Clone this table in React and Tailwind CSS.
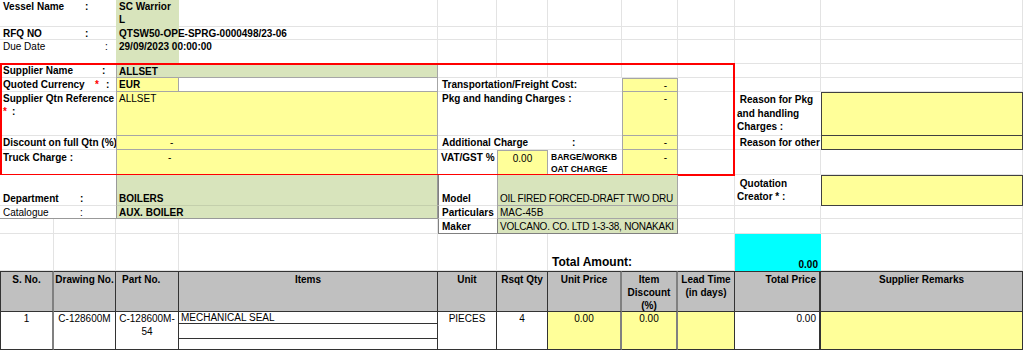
const GRID =
  'grid grid-cols-[54px_62px_63px_259px_59px_51px_74px_56px_57px_86px_202px] grid-rows-[27px_13px_24px_14px_14px_44px_14px_25px_31px_13px_15px_37px_41px_38px]'

const th = 'bg-[#c0c0c0] border-y border-[#333333] pt-px font-bold'
const td = 'border-b border-[#333333]'

export default function App() {
  return (
    <div className="grid w-[1024px] h-[352px] overflow-hidden bg-white text-black text-[10px] leading-[13px] font-['Liberation_Sans',Arial,sans-serif]">
      {/* sheet gridlines */}
      <div className={`${GRID} col-start-1 row-start-1`}>
        {Array.from({ length: 154 }, (_, i) => (
          <div key={i} className="border-r border-b border-[#e3e3e3]" />
        ))}
      </div>

      <div className={`${GRID} col-start-1 row-start-1`}>
        {/* Header block */}
        <div className="col-start-1 col-span-2 row-start-1 flex bg-white border-b border-[#e3e3e3] pl-[3px] font-bold">
          <span className="w-[82px]">Vessel Name</span>:
        </div>
        <div className="col-start-3 row-start-1 row-span-3 bg-[#d8e4bc] pl-[3px] font-bold">
          SC Warrior
          <br />L
        </div>
        <div className="col-start-1 col-span-2 row-start-2 flex bg-white border-b border-[#e3e3e3] pl-[3px] font-bold">
          <span className="w-[82px]">RFQ NO</span>:
        </div>
        <div className="col-start-3 col-span-3 row-start-2 pl-[3px] font-bold whitespace-nowrap">QTSW50-OPE-SPRG-0000498/23-06</div>
        <div className="col-start-1 col-span-2 row-start-3 flex bg-white border-b border-[#e3e3e3] pl-[3px]">
          <span className="w-[102px]">Due Date</span>:
        </div>
        <div className="col-start-3 col-span-3 row-start-3 pl-[3px] font-bold whitespace-nowrap">29/09/2023 00:00:00</div>

        {/* Supplier block */}
        <div className="col-start-1 col-span-2 row-start-4 flex items-center bg-white border-b border-[#e3e3e3] pl-[3px] font-bold">
          <span className="w-[99px]">Supplier Name</span>:
        </div>
        <div className="col-start-3 col-span-2 row-start-4 flex items-center bg-[#d8e4bc] border border-[#a6a6a6] pl-[2px] font-bold">ALLSET</div>

        <div className="col-start-1 col-span-2 row-start-5 flex items-center bg-white border-b border-[#e3e3e3] pl-[3px] font-bold">
          <span className="w-[92px]">Quoted Currency</span>
          <span className="w-[11px] text-[#ff0000]">*</span>:
        </div>
        <div className="col-start-3 row-start-5 flex items-center bg-[#ffff99] border-x border-b border-[#a6a6a6] pl-[2px] font-bold">EUR</div>
        <div className="col-start-4 row-start-5 bg-white border-r border-b border-[#a6a6a6]" />
        <div className="col-start-5 col-span-3 row-start-5 flex items-center bg-white border-b border-[#e3e3e3] pl-[4px] font-bold whitespace-nowrap">
          Transportation/Freight Cost:
        </div>
        <div className="col-start-8 row-start-5 flex items-center justify-end bg-[#ffff99] border border-[#a6a6a6] pr-[10px]">-</div>

        <div className="col-start-1 col-span-2 row-start-6 bg-white border-b border-[#e3e3e3] pl-[3px] font-bold">
          Supplier Qtn Reference
          <br />
          <span className="inline-block w-[9px] text-[#ff0000]">*</span>:
        </div>
        <div className="col-start-3 col-span-2 row-start-6 bg-[#ffff99] border-x border-b border-[#a6a6a6] pl-[2px]">ALLSET</div>
        <div className="col-start-5 col-span-3 row-start-6 bg-white border-b border-[#e3e3e3] pl-[4px] font-bold">Pkg and handing Charges :</div>
        <div className="col-start-8 row-start-6 bg-[#ffff99] border-x border-b border-[#a6a6a6] pr-[10px] text-right">-</div>
        <div className="col-start-10 row-start-6 bg-white border-b border-[#e3e3e3] pl-[2px] pt-px leading-[13.5px] font-bold">
          {'\u00a0'}Reason for Pkg and handling Charges :
        </div>
        <div className="col-start-11 row-start-6 bg-[#ffff99] border border-[#404040]" />

        <div className="col-start-1 col-span-2 row-start-7 flex items-center bg-white border-b border-[#e3e3e3] pl-[3px] font-bold whitespace-nowrap">
          Discount on full Qtn (%)
        </div>
        <div className="col-start-3 col-span-2 row-start-7 flex items-center bg-[#ffff99] border-x border-b border-[#a6a6a6] pl-[53px]">-</div>
        <div className="col-start-5 col-span-3 row-start-7 flex items-center bg-white border-b border-[#e3e3e3] pl-[4px] font-bold">
          <span className="w-[130px]">Additional Charge</span>:
        </div>
        <div className="col-start-8 row-start-7 flex items-center justify-end bg-[#ffff99] border-x border-b border-[#a6a6a6] pr-[10px]">-</div>
        <div className="col-start-10 row-start-7 flex items-center bg-white border-b border-[#e3e3e3] pl-[2px] font-bold whitespace-nowrap">
          {'\u00a0'}Reason for other
        </div>
        <div className="col-start-11 row-start-7 bg-[#ffff99] border-x border-b border-[#404040]" />

        <div className="col-start-1 col-span-2 row-start-8 bg-white border-b border-[#e3e3e3] pl-[3px] pt-px font-bold">Truck Charge :</div>
        <div className="col-start-3 col-span-2 row-start-8 bg-[#ffff99] border-x border-b border-[#a6a6a6] pl-[51px] pt-px">-</div>
        <div className="col-start-5 row-start-8 bg-white border-b border-[#e3e3e3] pl-[3px] pt-px font-bold whitespace-nowrap">VAT/GST %</div>
        <div className="col-start-6 row-start-8 bg-[#ffff99] border border-[#a6a6a6] pt-px text-center">0.00</div>
        <div className="col-start-7 row-start-8 bg-white border-b border-[#e3e3e3] pl-[3px] pt-[2px] text-[8.5px] leading-[11.5px] font-bold">
          BARGE/WORKB
          <br />
          OAT CHARGE
        </div>
        <div className="col-start-8 row-start-8 bg-[#ffff99] border-x border-b border-[#a6a6a6] pt-px pr-[10px] text-right">-</div>

        {/* supplier entry frame */}
        <div className="col-start-1 col-end-10 row-start-4 row-end-9 -my-px border-2 border-[#ff0000]" />

        {/* Equipment block */}
        <div className="col-start-1 col-span-2 row-start-9 flex items-end bg-white border-b border-[#e3e3e3] pl-[3px] font-bold">
          <span className="w-[77px]">Department</span>:
        </div>
        <div className="col-start-3 col-span-2 row-start-9 flex items-end bg-[#d8e4bc] border-x border-b border-x-[#999999] border-b-[#c4cfac] pl-[2px] font-bold">
          BOILERS
        </div>
        <div className="col-start-5 row-start-9 flex items-end bg-white border-l border-b border-l-[#808080] border-b-[#e3e3e3] pl-[3px] font-bold">Model</div>
        <div className="col-start-6 col-span-3 row-start-9 flex items-end overflow-hidden whitespace-nowrap bg-[#d8e4bc] border-x border-b border-[#a6a6a6] pl-[2px] tracking-[-0.25px]">
          OIL FIRED FORCED-DRAFT TWO DRU
        </div>
        <div className="col-start-10 row-start-9 flex items-center bg-white border-b border-[#e3e3e3] pl-[2px] font-bold">
          <div>
            {'\u00a0'}Quotation
            <br />
            Creator * :
          </div>
        </div>
        <div className="col-start-11 row-start-9 bg-[#ffff99] border border-[#404040]" />

        <div className="col-start-1 col-span-2 row-start-10 flex items-center bg-white border-b border-[#999999] pl-[3px]">
          <span className="w-[77px]">Catalogue</span>:
        </div>
        <div className="col-start-3 col-span-2 row-start-10 flex items-center bg-[#d8e4bc] border-x border-b border-[#999999] pl-[2px] font-bold">AUX. BOILER</div>
        <div className="col-start-5 row-start-10 flex items-center bg-white border-l border-b border-l-[#808080] border-b-[#e3e3e3] pl-[3px] font-bold">Particulars</div>
        <div className="col-start-6 col-span-3 row-start-10 flex items-center bg-[#d8e4bc] border-x border-b border-[#a6a6a6] pl-[2px]">MAC-45B</div>

        <div className="col-start-5 row-start-11 flex items-center bg-white border-l border-b border-[#808080] pl-[3px] font-bold">Maker</div>
        <div className="col-start-6 col-span-3 row-start-11 flex items-center overflow-hidden whitespace-nowrap bg-[#d8e4bc] border-x border-b border-[#808080] pl-[2px] tracking-[-0.25px]">
          VOLCANO. CO. LTD 1-3-38, NONAKAKI
        </div>

        {/* Total */}
        <div className="col-start-7 col-span-2 row-start-12 flex items-end bg-white border-b border-[#e3e3e3] pl-[4px] text-[12px] leading-[15px] font-bold whitespace-nowrap">
          Total Amount:
        </div>
        <div className="col-start-10 row-start-12 flex items-end justify-end bg-[#00ffff] pr-[3px] font-bold">0.00</div>

        {/* Item table header */}
        <div className={`${th} col-start-1 row-start-13 border-l border-r-2 border-r-[#808080] text-center`}>S. No.</div>
        <div className={`${th} col-start-2 row-start-13 border-r text-center`}>Drawing No.</div>
        <div className={`${th} col-start-3 row-start-13 border-r pl-[6px]`}>Part No.</div>
        <div className={`${th} col-start-4 row-start-13 border-r text-center`}>Items</div>
        <div className={`${th} col-start-5 row-start-13 border-r text-center`}>Unit</div>
        <div className={`${th} col-start-6 row-start-13 border-r text-center`}>Rsqt Qty</div>
        <div className={`${th} col-start-7 row-start-13 border-r-2 border-r-[#808080] text-center`}>Unit Price</div>
        <div className={`${th} col-start-8 row-start-13 border-r-2 border-r-[#808080] text-center`}>Item Discount (%)</div>
        <div className={`${th} col-start-9 row-start-13 border-r text-center`}>Lead Time (in days)</div>
        <div className={`${th} col-start-10 row-start-13 border-r-2 pr-[3px] text-right`}>Total Price</div>
        <div className={`${th} col-start-11 row-start-13 border-r text-center`}>Supplier Remarks</div>

        {/* Item rows */}
        <div className={`${td} col-start-1 row-start-14 bg-white border-l border-r-2 border-r-[#808080] text-center`}>1</div>
        <div className={`${td} col-start-2 row-start-14 bg-white border-r text-center`}>C-128600M</div>
        <div className={`${td} col-start-3 row-start-14 bg-white border-r text-center`}>
          C-128600M-
          <br />
          54
        </div>
        <div className={`${td} col-start-4 row-start-14 flex flex-col bg-white border-r`}>
          <div className="h-[12px] border-b border-[#333333] pl-[2px] leading-[12px]">MECHANICAL SEAL</div>
          <div className="h-[15px] border-b border-[#333333]" />
          <div className="flex-1" />
        </div>
        <div className={`${td} col-start-5 row-start-14 bg-white border-r text-center`}>PIECES</div>
        <div className={`${td} col-start-6 row-start-14 bg-white border-r text-center`}>4</div>
        <div className={`${td} col-start-7 row-start-14 bg-[#ffff99] border-r-2 border-r-[#808080] text-center`}>0.00</div>
        <div className={`${td} col-start-8 row-start-14 bg-[#ffff99] border-r-2 border-r-[#808080] text-center`}>0.00</div>
        <div className={`${td} col-start-9 row-start-14 bg-[#ffff99] border-r`} />
        <div className={`${td} col-start-10 row-start-14 bg-white border-r-2 pr-[3px] text-right`}>0.00</div>
        <div className={`${td} col-start-11 row-start-14 bg-[#ffff99] border-r`} />
      </div>
    </div>
  )
}
